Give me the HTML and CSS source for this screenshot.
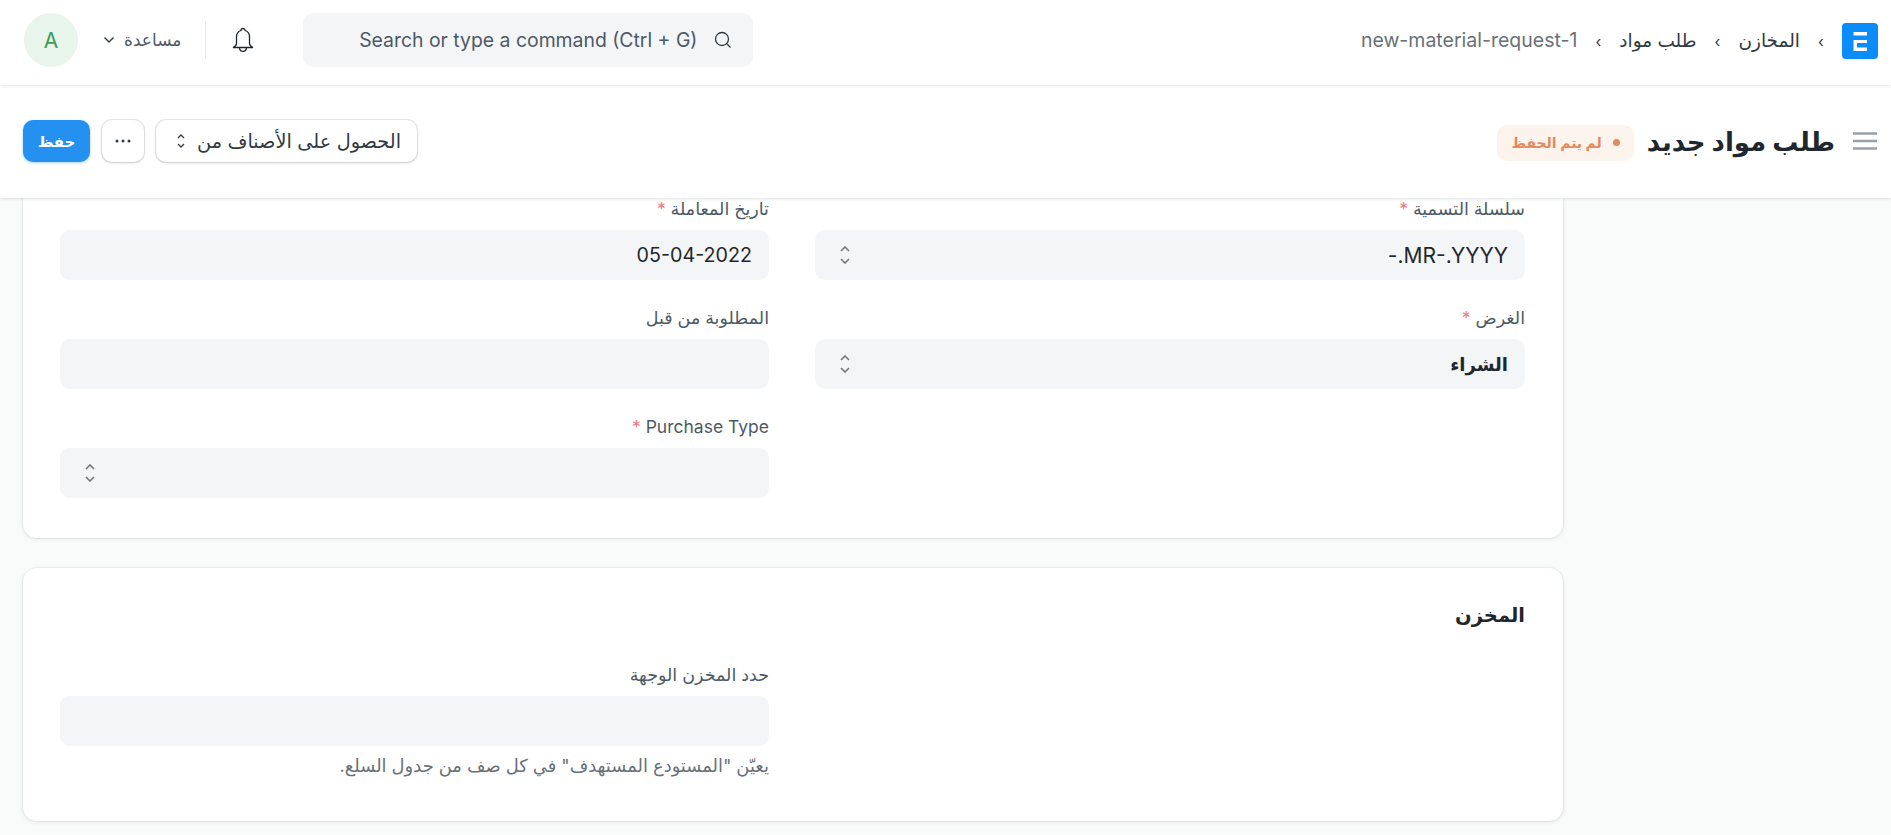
FILE: index.html
```html
<!DOCTYPE html>
<html lang="ar" dir="rtl">
<head>
<meta charset="utf-8">
<title>طلب مواد جديد</title>
<link rel="stylesheet" href="styles.css">
</head>
<body>
<header class="navbar">
  <nav class="crumbs">
    <svg class="logo" viewBox="0 0 36 36"><rect width="36" height="36" rx="4" fill="#0b8cfb"/><path d="M11.500 9h13.500v3.500H11.500zM11.500 17h13.500v3h-10v4.500h10V28H11.500z" fill="#fff"/></svg>
    <span class="sep">›</span><a>المخازن</a>
    <span class="sep">›</span><a>طلب مواد</a>
    <span class="sep">›</span><a class="current" dir="ltr">new-material-request-1</a>
  </nav>
  <div class="nav-tools">
    <div class="search">
      <svg class="search-icon" viewBox="0 0 20 20"><circle cx="9" cy="9" r="6.500"/><path d="M14 14l3.500 3.500"/></svg>
      <span dir="ltr">Search or type a command (Ctrl + G)</span>
    </div>
    <svg class="bell" viewBox="0 0 22 26"><path d="M11 1.500c-1.300 0-2 .9-2 2C5.800 4.500 4.500 7 4.500 10v6.500c0 1.700-1.300 3-3.500 4h20c-2.200-1-3.500-2.300-3.500-4V10c0-3-1.300-5.500-4.500-6.500 0-1.100-.7-2-2-2z"/><path d="M7.500 20.500c0 2.400 1.500 3.800 3.500 3.800s3.500-1.400 3.500-3.800"/></svg>
    <span class="divider"></span>
    <div class="help">
      <span>مساعدة</span>
      <svg class="chev" viewBox="0 0 12 8"><path d="M1.500 1.500L6 6l4.500-4.500"/></svg>
    </div>
    <div class="avatar">A</div>
  </div>
</header>

<section class="page-head">
  <div class="title-group">
    <svg class="menu" viewBox="0 0 24 18"><path d="M0 1.500h24M0 9h24M0 16.500h24"/></svg>
    <h1>طلب مواد جديد</h1>
    <span class="badge"><i class="dot"></i>لم يتم الحفظ</span>
  </div>
  <div class="actions">
    <button class="btn btn-menu">الحصول على الأصناف من
      <svg class="updown small" viewBox="0 0 8 16"><path d="M1 5L4 2l3 3M1 11l3 3 3-3"/></svg>
    </button>
    <button class="btn btn-more" aria-label="المزيد"><svg viewBox="0 0 16 4"><circle cx="2" cy="2" r="1.500"/><circle cx="8" cy="2" r="1.500"/><circle cx="14" cy="2" r="1.500"/></svg></button>
    <button class="btn btn-primary">حفظ</button>
  </div>
</section>

<main class="page">
  <section class="card card-top">
    <div class="grid">
      <div class="field">
        <label>سلسلة التسمية <em>*</em></label>
        <div class="control select"><span class="code" dir="ltr">-.MR-.YYYY</span><svg class="updown" viewBox="0 0 10 18"><path d="M1 5l4-4 4 4M1 13l4 4 4-4"/></svg></div>
      </div>
      <div class="field">
        <label>تاريخ المعاملة <em>*</em></label>
        <div class="control"><span dir="ltr">05-04-2022</span></div>
      </div>
      <div class="field">
        <label>الغرض <em>*</em></label>
        <div class="control select"><span class="strong">الشراء</span><svg class="updown" viewBox="0 0 10 18"><path d="M1 5l4-4 4 4M1 13l4 4 4-4"/></svg></div>
      </div>
      <div class="field">
        <label>المطلوبة من قبل</label>
        <div class="control"></div>
      </div>
      <div class="field"></div>
      <div class="field">
        <label><span dir="ltr">Purchase Type</span> <em>*</em></label>
        <div class="control select"><span></span><svg class="updown" viewBox="0 0 10 18"><path d="M1 5l4-4 4 4M1 13l4 4 4-4"/></svg></div>
      </div>
    </div>
  </section>

  <section class="card card-store">
    <h2>المخزن</h2>
    <div class="grid">
      <div class="field empty"></div>
      <div class="field">
        <label>حدد المخزن الوجهة</label>
        <div class="control"></div>
        <p class="hint">يعيّن "المستودع المستهدف" في كل صف من جدول السلع.</p>
      </div>
    </div>
  </section>
</main>
</body>
</html>
```
FILE: styles.css
```css
* { box-sizing: border-box; }
html, body { margin: 0; height: 100%; }
body {
  width: 1891px;
  height: 835px;
  overflow: hidden;
  background: #f9fafa;
  color: #1f272e;
  font-family: Inter, "Noto Sans", "DejaVu Sans", sans-serif;
  font-size: 16px;
}
.navbar {
  position: relative;
  z-index: 3;
  height: 85px;
  display: flex;
  align-items: center;
  justify-content: space-between;
  padding: 0 13px 5px 24px;
  background: #fff;
  box-shadow: 0 1px 3px rgba(25, 39, 52, .12);
}
.crumbs {
  display: flex;
  align-items: center;
  font-size: 18.500px;
  color: #313b44;
}
.logo { width: 36px; height: 36px; margin-top: 2px; }
.sep { margin: 2px 18px 0; font-size: 15px; width: 6px; text-align: center; }
.crumbs .current { color: #687178; font-size: 19.500px; }
.nav-tools { display: flex; align-items: center; }
.search {
  width: 450px;
  height: 54px;
  display: flex;
  align-items: center;
  gap: 16px;
  padding: 0 20px;
  background: #f3f5f6;
  border-radius: 10px;
  color: #4c5a67;
  font-size: 19.400px;
}
.search-icon { width: 20px; height: 20px; fill: none; stroke: #313b44; stroke-width: 1.300; }
.bell { width: 22px; height: 26px; margin: 0 49px 0 26px; fill: none; stroke: #1f272e; stroke-width: 1.300; }
.divider { width: 1px; height: 36px; background: #e2e6e9; }
.help { display: flex; align-items: center; gap: 9px; margin: 0 24px 0 25px; color: #4c5a67; font-size: 17px; }
.chev { width: 12px; height: 8px; fill: none; stroke: #313b44; stroke-width: 1.400; }
.avatar {
  width: 54px;
  height: 54px;
  border-radius: 50%;
  display: flex;
  align-items: center;
  justify-content: center;
  background: #e8f5ea;
  color: #3d9a5b;
  font-size: 21px;
}
.page-head {
  position: relative;
  z-index: 2;
  height: 113px;
  display: flex;
  align-items: center;
  justify-content: space-between;
  padding: 0 14px 1px 23px;
  background: #fff;
  box-shadow: 0 1px 3px rgba(25, 39, 52, .14);
}
.title-group { display: flex; align-items: center; }
.menu { width: 24px; height: 18px; margin-left: 18px; fill: none; stroke: #98a1a9; stroke-width: 2.400; }
h1 { margin: 0 0 0 13px; font-size: 26px; font-weight: 700; color: #1f272e; }
.badge {
  height: 36px;
  margin-top: 3px;
  display: inline-flex;
  align-items: center;
  gap: 11px;
  padding: 0 14px;
  border-radius: 10px;
  background: #fdf3ed;
  color: #e58a5c;
  font-size: 14px;
  font-weight: 600;
}
.dot { width: 7px; height: 7px; border-radius: 50%; background: #e58a5c; }
.actions { display: flex; align-items: center; gap: 12px; }
.btn {
  height: 42px;
  display: inline-flex;
  align-items: center;
  gap: 12px;
  padding: 0;
  border: 0;
  border-radius: 10px;
  background: #fff;
  color: #313b44;
  font: inherit;
  font-size: 19.300px;
  box-shadow: 0 0 0 1px rgba(25, 39, 52, .1), 0 1px 3px rgba(25, 39, 52, .16);
}
.btn-menu { padding: 0 16px 0 21px; }
.btn-more { width: 42px; justify-content: center; }
.btn-more svg { width: 16px; height: 4px; fill: #313b44; }
.btn-primary { width: 67px; justify-content: center; background: #2490ef; color: #fff; font-weight: 600; font-size: 15px; box-shadow: 0 1px 3px rgba(36, 144, 239, .4); }
.updown { width: 10px; height: 18px; fill: none; stroke: #6e7880; stroke-width: 1.600; flex: none; }
.updown.small { width: 8px; height: 16px; stroke: #313b44; stroke-width: 1.300; }
.page { width: 1540px; margin-right: 328px; }
.card {
  background: #fff;
  box-shadow: 0 0 0 1px rgba(25, 39, 52, .04), 0 1px 4px rgba(25, 39, 52, .1);
  padding: 0 38px;
}
.card-top {
  height: 340px;
  border-radius: 0 0 14px 14px;
}
.card-store {
  height: 253px;
  margin-top: 30px;
  padding-top: 34px;
  border-radius: 14px;
}
h2 { margin: 0; height: 26px; font-size: 19.500px; font-weight: 700; line-height: 26px; color: #1f272e; }
.grid {
  display: grid;
  grid-template-columns: 710px 709px;
  column-gap: 46px;
  row-gap: 27px;
}
.field { min-height: 50px; }
.field label {
  display: block;
  height: 32px;
  line-height: 22px;
  font-size: 17.500px;
  color: #4c5a67;
}
.field em { color: #e24c4c; font-style: normal; opacity: .7; }
.control {
  height: 50px;
  display: flex;
  align-items: center;
  justify-content: space-between;
  padding: 0 17px;
  background: #f3f5f6;
  border-radius: 10px;
  font-size: 19.700px;
  color: #1f272e;
}
.code { font-size: 21px; }
.strong { font-weight: 600; font-size: 18px; }
.select { padding-left: 25px; }
.hint { margin: 10px 0 0; color: #687178; font-size: 17.900px; line-height: 20px; }
.card-store .grid { margin-top: 36px; }
```
